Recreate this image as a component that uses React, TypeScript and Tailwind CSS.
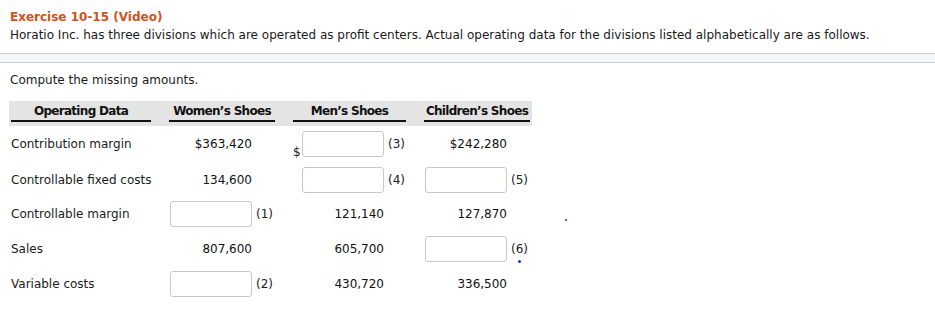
import React from "react";

const font = { fontFamily: '"DejaVu Sans", Verdana, sans-serif' };

function Box() {
  return <div className="w-[82px] h-[26px] border border-[#c8c8c8] rounded-[3px] bg-white shrink-0" />;
}

type Cell = { v?: string; input?: boolean; n?: string; dollar?: boolean };

function ValCell({ c, w, pl }: { c: Cell; w: string; pl: string }) {
  return (
    <div className={`${w} ${pl} flex items-center h-full`}>
      {c.dollar ? (
        <div className="w-[9px] self-end pb-[4px] text-[12px] leading-none text-[#222]">$</div>
      ) : null}
      {c.input ? (
        <Box />
      ) : (
        <div className="w-[82px] text-right text-[12px] text-[#111] shrink-0 whitespace-nowrap">{c.v}</div>
      )}
      {c.n ? <div className="ml-[4px] text-[12px] text-[#222] whitespace-nowrap">{c.n}</div> : null}
    </div>
  );
}

const rows: { label: string; h: string; a: Cell; b: Cell; c: Cell }[] = [
  { label: "Contribution margin", h: "h-[36px]", a: { v: "$363,420" }, b: { input: true, n: "(3)", dollar: true }, c: { v: "$242,280" } },
  { label: "Controllable fixed costs", h: "h-[35px]", a: { v: "134,600" }, b: { input: true, n: "(4)" }, c: { input: true, n: "(5)" } },
  { label: "Controllable margin", h: "h-[34px]", a: { input: true, n: "(1)" }, b: { v: "121,140" }, c: { v: "127,870" } },
  { label: "Sales", h: "h-[35px]", a: { v: "807,600" }, b: { v: "605,700" }, c: { input: true, n: "(6)" } },
  { label: "Variable costs", h: "h-[35px]", a: { input: true, n: "(2)" }, b: { v: "430,720" }, c: { v: "336,500" } },
];

const hd = "w-full text-center border-b-2 border-[#111] leading-[17px] pt-[2px] whitespace-nowrap tracking-[-0.7px]";

export default function App() {
  return (
    <div className="w-[935px] h-[324px] bg-white relative overflow-hidden" style={font}>
      <div className="pt-[8px] px-[10px]">
        <div className="text-[12px] leading-[18px] font-bold text-[#d4501c] whitespace-nowrap">Exercise 10-15 (Video)</div>
        <div className="text-[12px] leading-[18px] text-[#1a1a1a] whitespace-nowrap">
          Horatio Inc. has three divisions which are operated as profit centers. Actual operating data for the divisions listed alphabetically are as follows.
        </div>
      </div>
      <div className="mt-[9px] h-[10px] border-t border-b border-[#c9cfdd] bg-[#f5f8fb]" />
      <div className="pt-[8px] px-[10px] text-[12px] leading-[18px] text-[#1a1a1a]">Compute the missing amounts.</div>
      <div className="ml-[9px] mt-[12px] w-[523px]">
        <div className="flex h-[25px] bg-[#e4e4e4] text-[12px] font-bold text-[#111]">
          <div className="w-[151px] pl-[2px] pr-[9px] h-full flex items-start">
            <div className={hd}>Operating Data</div>
          </div>
          <div className="w-[124px] pl-[9px] pr-[9px] h-full flex items-start">
            <div className={hd}>Women’s Shoes</div>
          </div>
          <div className="w-[131px] pl-[9px] pr-[9px] h-full flex items-start">
            <div className={hd}>Men’s Shoes</div>
          </div>
          <div className="w-[117px] pl-[9px] pr-[2px] h-full flex items-start">
            <div className={hd}>Children’s Shoes</div>
          </div>
        </div>
        {rows.map((r) => (
          <div key={r.label} className={`flex items-center ${r.h}`}>
            <div className="w-[151px] pl-[2px] text-[12px] text-[#1a1a1a] whitespace-nowrap">{r.label}</div>
            <ValCell c={r.a} w="w-[124px]" pl="pl-[10px]" />
            <ValCell c={r.b} w="w-[131px]" pl={r.b.dollar ? "pl-[9px]" : "pl-[18px]"} />
            <ValCell c={r.c} w="w-[117px]" pl="pl-[10px]" />
          </div>
        ))}
      </div>
      <div className="absolute left-[565px] top-[219px] w-[2px] h-[2px] bg-[#1a2fe0] rounded-full" />
      <div className="absolute left-[518px] top-[260px] w-[3px] h-[3px] bg-[#1a2fe0] rounded-full" />
    </div>
  );
}
